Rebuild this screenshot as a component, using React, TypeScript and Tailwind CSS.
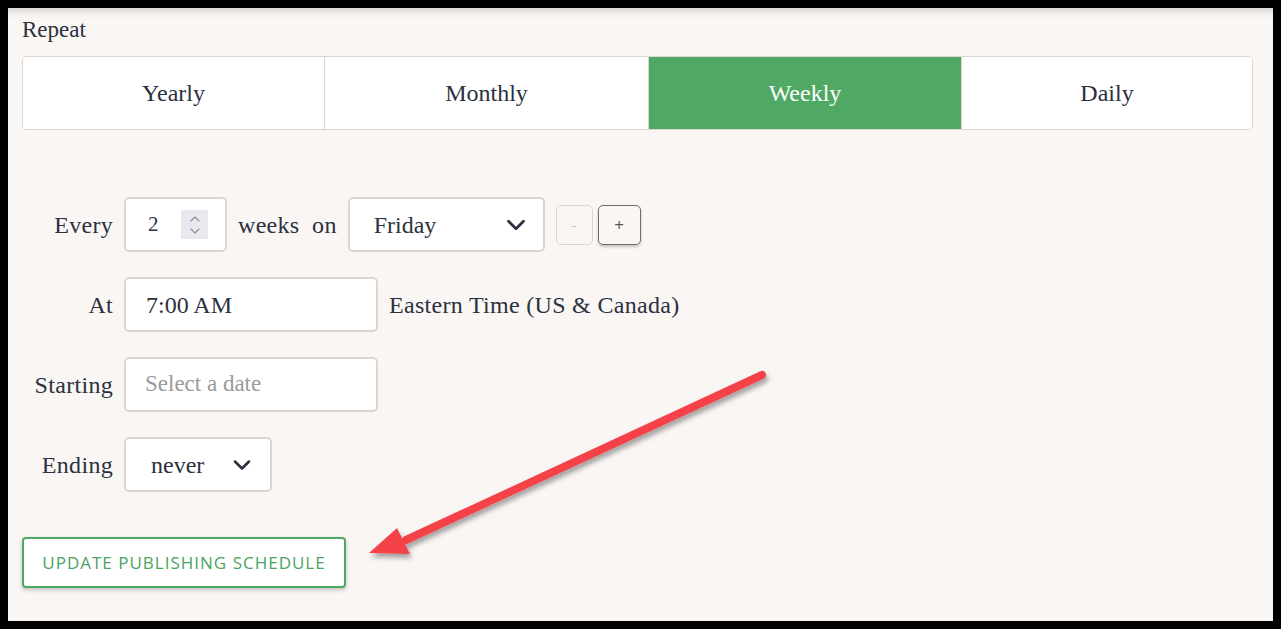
import { ChevronDown, ChevronUp } from "lucide-react";

const serif = { fontFamily: '"Liberation Serif", "Times New Roman", serif' };

const Tab = ({ label, active, w }: { label: string; active?: boolean; w: string }) => (
  <div
    className={`${w} flex items-center justify-center text-[24px] border-r border-[#ddd6cf] last:border-r-0 ${
      active ? "bg-[#4fa964] text-white" : "bg-white text-[#2b3140]"
    }`}
  >
    {label}
  </div>
);

const Label = ({ children }: { children: any }) => (
  <div className="w-[91px] text-right text-[24px] tracking-[0.3px] text-[#2b3140]">{children}</div>
);

const Box = ({ w, children }: { w: string; children: any }) => (
  <div className={`${w} h-[55px] bg-white border-2 border-[#ddd6cf] rounded-[5px] flex items-center`}>
    {children}
  </div>
);

function App() {
  return (
    <div className="w-[1281px] h-[629px] bg-black p-[8px]" style={serif}>
      <div className="relative w-[1265px] h-[613px] bg-[#f9f6f4] shadow-[inset_0_10px_10px_-8px_rgba(0,0,0,0.18)] pl-[14px] pr-[20px] pt-[1px]">
        <div className="text-[23px] text-[#2b3140] leading-[42px]">Repeat</div>
        <div className="mt-[5px] flex h-[74px] border border-[#ddd6cf] rounded-[5px] overflow-hidden">
          <Tab label="Yearly" w="w-[302px]" />
          <Tab label="Monthly" w="w-[324px]" />
          <Tab label="Weekly" w="w-[313px]" active />
          <Tab label="Daily" w="flex-1" />
        </div>

        <div className="mt-[67px] flex flex-col gap-[25px] text-[#2b3140]">
          <div className="flex items-center">
            <Label>Every</Label>
            <div className="ml-[11px]">
              <Box w="w-[103px]">
                <span className="ml-[22px] text-[21px] w-[33px]">2</span>
                <span className="w-[27px] h-[29px] bg-[#e9e8ee] flex flex-col items-center justify-center text-[#8c8f99]">
                  <ChevronUp size={16} strokeWidth={1.6} className="-mb-[4px]" />
                  <ChevronDown size={16} strokeWidth={1.6} />
                </span>
              </Box>
            </div>
            <span className="ml-[11px] text-[24px] tracking-[0.3px]">weeks&nbsp; on</span>
            <div className="ml-[11px]">
              <Box w="w-[197px]">
                <span className="ml-[24px] text-[24px] flex-1">Friday</span>
                <ChevronDown size={30} strokeWidth={2.2} className="mr-[12px] text-[#2b3140]" />
              </Box>
            </div>
            <div
              className="ml-[11px] w-[37px] h-[40px] border border-[#dcd7d2] rounded-[5px] flex items-center justify-center text-[#c4c4c4] text-[16px]"
              style={{ fontFamily: '"Open Sans", sans-serif' }}
            >
              -
            </div>
            <div
              className="ml-[5px] w-[43px] h-[40px] border border-[#6b6b6b] rounded-[5px] flex items-center justify-center text-[#555] text-[17px] shadow-[0_2px_3px_rgba(0,0,0,0.2)]"
              style={{ fontFamily: '"Open Sans", sans-serif' }}
            >
              +
            </div>
          </div>

          <div className="flex items-center">
            <Label>At</Label>
            <div className="ml-[11px]">
              <Box w="w-[254px]">
                <span className="ml-[20px] text-[24px]">7:00 AM</span>
              </Box>
            </div>
            <span className="ml-[11px] text-[24px] tracking-[0.3px]">Eastern Time (US &amp; Canada)</span>
          </div>

          <div className="flex items-center">
            <Label>Starting</Label>
            <div className="ml-[11px]">
              <Box w="w-[254px]">
                <span className="ml-[19px] text-[23px] text-[#9a9a9a]">Select a date</span>
              </Box>
            </div>
          </div>

          <div className="flex items-center">
            <Label>Ending</Label>
            <div className="ml-[11px]">
              <Box w="w-[148px]">
                <span className="ml-[25px] text-[24px] flex-1">never</span>
                <ChevronDown size={28} strokeWidth={2.2} className="mr-[14px]" />
              </Box>
            </div>
          </div>
        </div>

        <button
          className="mt-[45px] w-[324px] h-[51px] border-2 border-[#4fa964] rounded-[4px] bg-white text-[#4aa35f] text-[17px] tracking-[1px] shadow-[0_2px_4px_rgba(0,0,0,0.22)] flex items-center justify-center"
          style={{ fontFamily: '"Open Sans", sans-serif' }}
        >
          UPDATE PUBLISHING SCHEDULE
        </button>

        <svg className="absolute left-0 top-0 pointer-events-none" width="1265" height="613">
          <defs>
            <filter id="sh" x="-10%" y="-10%" width="120%" height="130%">
              <feDropShadow dx="2" dy="4" stdDeviation="2.5" floodColor="#000" floodOpacity="0.35" />
            </filter>
          </defs>
          <g filter="url(#sh)">
            <line x1="754" y1="367" x2="398" y2="532" stroke="#f5434a" strokeWidth="8" strokeLinecap="round" />
            <polygon points="361,545 389,520 402,546" fill="#f5434a" />
          </g>
        </svg>
      </div>
    </div>
  );
}

export default App;
